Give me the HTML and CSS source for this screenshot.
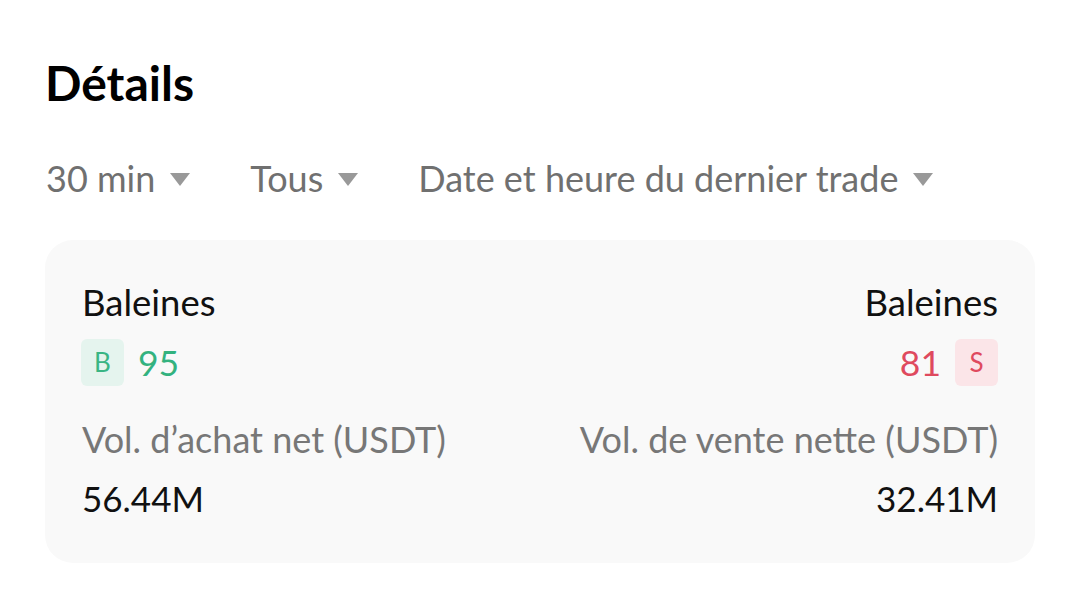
FILE: index.html
```html
<!DOCTYPE html>
<html lang="fr">
<head>
<meta charset="utf-8">
<link rel="stylesheet" href="styles.css">
</head>
<body>
<main class="page">
  <h1 class="title">Détails</h1>
  <div class="filters">
    <div class="filter"><span>30 min</span><span class="caret"></span></div>
    <div class="filter"><span>Tous</span><span class="caret"></span></div>
    <div class="filter"><span>Date et heure du dernier trade</span><span class="caret"></span></div>
  </div>
  <section class="card">
    <div class="col left">
      <div class="label-dark">Baleines</div>
      <div class="count buy"><span class="badge badge-buy">B</span><span>95</span></div>
      <div class="label-gray">Vol. d’achat net (USDT)</div>
      <div class="value">56.44M</div>
    </div>
    <div class="col right">
      <div class="label-dark">Baleines</div>
      <div class="count sell"><span>81</span><span class="badge badge-sell">S</span></div>
      <div class="label-gray">Vol. de vente nette (USDT)</div>
      <div class="value">32.41M</div>
    </div>
  </section>
</main>
</body>
</html>
```

FILE: styles.css
```css
* { box-sizing: border-box; }
html, body { margin: 0; padding: 0; background: #ffffff; }
body {
  font-family: "Lato", "Open Sans", sans-serif;
  color: #000;
  width: 1080px;
  height: 607px;
  overflow: hidden;
}
.page {
  padding: 54px 45px 0 45px;
}
.title {
  margin: 0;
  font-size: 48px;
  font-weight: 700;
  line-height: 58px;
}
.filters {
  display: flex;
  align-items: center;
  gap: 60px;
  margin-top: 44px;
  padding-left: 1px;
  height: 44px;
}
.filter {
  display: flex;
  align-items: center;
  gap: 15px;
  font-size: 36px;
  color: #707070;
  line-height: 44px;
}
.caret {
  width: 0;
  height: 0;
  border-left: 10.5px solid transparent;
  border-right: 10.5px solid transparent;
  border-top: 13px solid #999999;
  margin-top: 2px;
}
.card {
  margin-top: 40px;
  width: 990px;
  height: 323px;
  background: #f9f9f9;
  border-radius: 28px;
  padding: 42px 37px 0 37px;
  display: flex;
  justify-content: space-between;
}
.col { display: flex; flex-direction: column; }
.col.right { align-items: flex-end; }
.label-dark {
  font-size: 36.5px;
  line-height: 40px;
  color: #111;
}
.count {
  display: flex;
  align-items: center;
  gap: 14px;
  margin-top: 17px;
  font-size: 35.5px;
  line-height: 47px;
}
.count.buy { color: #33b27f; }
.count.sell { color: #df4a5e; }
.badge {
  width: 43px;
  height: 47px;
  border-radius: 6px;
  display: flex;
  align-items: center;
  justify-content: center;
  font-size: 26px;
}
.badge-buy { background: #e5f4ee; color: #3ab584; }
.badge-sell { background: #fbe5e8; color: #df4a5e; }
.left .count { margin-left: -1px; }
.label-gray {
  margin-top: 33px;
  font-size: 36px;
  line-height: 40px;
  color: #777777;
}
.value {
  margin-top: 19px;
  font-size: 35px;
  line-height: 40px;
  color: #111;
}
```
